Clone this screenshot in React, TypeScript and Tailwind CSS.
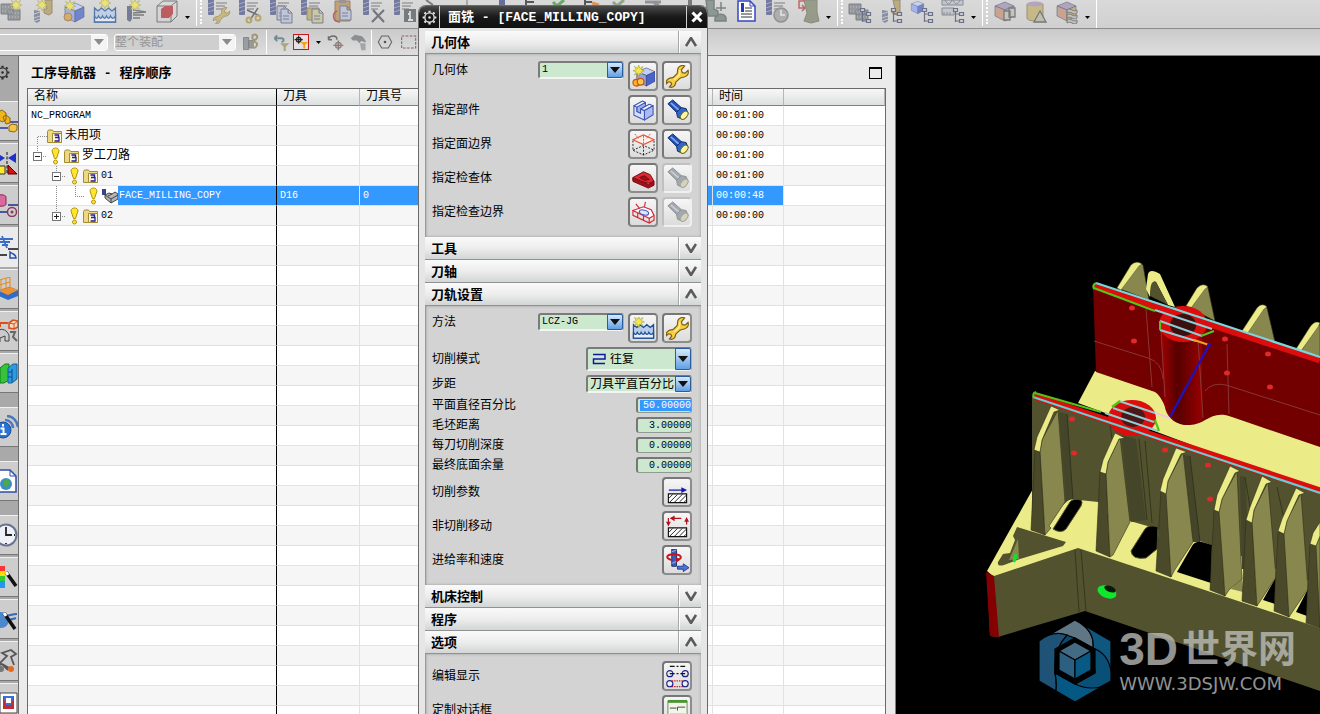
import { useState } from "react"
import type { ReactNode } from "react"
import clsx from "clsx"

const sans = "font-['Liberation_Sans','Noto_Sans_CJK_SC',sans-serif]"
const mono = "font-['Liberation_Mono','Noto_Sans_CJK_SC',monospace]"

/* ---------- shared icon pieces, all on a 24 x 24 grid ---------- */

function Icon({ children, className = "size-6" }: { children: ReactNode; className?: string }) {
    return (
        <svg viewBox="0 0 24 24" className={clsx("shrink-0", className)} fill="none" stroke="none" aria-hidden="true">
            {children}
        </svg>
    )
}

const Star = ({ x = 0, y = 0 }) => (
    <path
        transform={`translate(${x} ${y})`}
        d="M6 0l1.2 3.6L10.500 1.500 8.600 4.800 12 6 8.600 7.200 10.500 10.500 7.200 8.600 6 12 4.800 8.600 1.500 10.500 3.400 7.200 0 6 3.400 4.800 1.500 1.500 4.800 3.400z"
        fill="#f4e84c"
        stroke="#8f8a3c"
        strokeWidth=".5"
    />
)

const Cutter = () => (
    <g>
        <rect x="1" y="-2" width="6" height="17" rx="1" fill="#4b5488" />
        <path d="M1 4l6-2M1 8l6-2M1 12l6-2" stroke="#8d96c0" />
        <path d="M9 3h11M9 6h9M9 9h7" stroke="#55585f" />
    </g>
)

const TreeMark = () => (
    <g stroke="#3f4768" strokeWidth="1.200">
        <path d="M14.500 11v11M14.500 14h4M14.500 21h4" />
        <path d="M12.500 8.500h4v3h-4zM18.500 12.500h4v3h-4zM18.500 19.500h4v3h-4z" fill="#c4c8d6" />
    </g>
)

const Cube = ({ top = "#c3cffa", left = "#8fa4f0", right = "#4763cc", x = 0, y = 0, s = 1 }) => (
    <g transform={`translate(${x} ${y}) scale(${s})`} stroke="#333a66" strokeWidth=".6">
        <path d="M2 6l10-4 9 4-9 4z" fill={top} />
        <path d="M2 6l10 4v11L2 16z" fill={left} />
        <path d="M12 10l9-4v10l-9 5z" fill={right} />
    </g>
)

const Waves = () => (
    <g fill="#b8cdea" stroke="#1c4f96" strokeWidth="1.300">
        <path d="M1.500 8v14h21V8l-3.500 3-3.500-3-3.500 3-3.500-3-3.500 3z" />
        <path d="M1.500 16c1.500 3 3 3 4 0 1.500 3 3 3 4 0 1.500 3 3 3 4 0 1.500 3 3 3 4 0 1.500 3 3 3 5 0v6h-21z" fill="#e8f0fb" />
    </g>
)

const DrillPart = () => (
    <g>
        <path d="M3 10l6 1v10l-3 2-3-2z" fill="#68718a" />
        <path d="M3 14l6-2M3 18l6-2M3 21l6-2" stroke="#c1c6d2" />
        <path d="M14 0h7v13l-3 2-5-2v-4h3z" fill="#b09a5c" stroke="#7c7049" />
    </g>
)

const BlockPart = () => (
    <g>
        <path d="M1 4h12v10H1zM8 10h12v10H8z" fill="#7b8087" stroke="#595d63" />
        <path d="M2 7h10M2 11h10M9 13h10M9 17h10" stroke="#b6b9bd" strokeDasharray="1 2" />
    </g>
)

const Page = ({ x = 9, y = 8, fill = "#b7c0d8" }) => (
    <path transform={`translate(${x} ${y})`} d="M0 0h7l4 4v10H0zM7 0v4h4M2 7h6M2 10h6" fill={fill} stroke="#575c78" />
)

const wrenchPath =
    "M13 2.500c2-2 5-2.200 6.500-1.500l-3.500 4 1 3 3 .5 3-3c.8 3-.5 6-4 7-2 .5-3 .2-4.500 1.500l-4 3.500c-1 1.500-.3 3-2 4.500-1.500 1.500-3.500 1.500-5 1l2.500-3-1-2-2.500-.5-2 2c-.6-2.500.5-4.500 2.500-5.500 2-1 3.500-.2 5-1.500l3.500-3.500c1-1.500 0-4.500 1.500-6.500z"

const toolbarCreate: ReactNode[] = [
    <><BlockPart /><Star x={10} y={-1} /></>,
    <><DrillPart /><Star x={5} y={-1} /></>,
    <><Cube x={1} y={1} /><circle cx="6" cy="17" r="4" fill="#d99a3c" stroke="#8c6a33" /><Star x={2} y={0} /></>,
    <><Waves /><Star x={6} y={-3} /></>,
    <><path d="M3 6h5v13l-2 3-3-2z" fill="#4e5677" /><path d="M9 10l13 2-13 1M9 15h11M9 18h7" stroke="#55585f" strokeWidth="1.500" /><Star x={5} y={-1} /></>,
    <><path d="M2 6l6-5h14v15l-6 6H2zM2 6h14v16M16 6l6-5" stroke="#555" /><path d="M6 9l4-3h8v8l-4 4H6z" fill="#b32b33" /></>,
]

const toolbarEdit: ReactNode[] = [
    <><Cutter /><path transform="translate(6 7) scale(.72)" d={wrenchPath} fill="#c7ad55" stroke="#776b42" /></>,
    <><Cutter /><path d="M12 20l8-12M9 10l13 6" stroke="#444" strokeWidth="1.500" /><circle cx="11" cy="20" r="2.500" stroke="#ad9540" strokeWidth="2" /><circle cx="20" cy="18" r="2.500" stroke="#ad9540" strokeWidth="2" /></>,
    <><Cutter /><Page x={8} y={6} /><Page x={12} y={9} /></>,
    <><Cutter /><path d="M7 8h12v12H7z" fill="#b9a662" stroke="#7b7047" /><Page x={12} y={9} fill="#c5c394" /></>,
    <><path d="M4 1h15v20H4z" fill="#b58c55" stroke="#7c6142" /><path d="M8-1h7v4H8z" fill="#7a7a80" /><Page x={9} y={6} /><path d="M9 22c-8 0-8-9-3-11" stroke="#b02f2f" strokeWidth="1.500" /></>,
    <><Cutter /><path d="M11 10l11 12M22 10L10 22" stroke="#4a4f5c" strokeWidth="2.200" /></>,
    <><Cutter /><path d="M11 9h12v13H11z" fill="#4f545c" /><path d="M17 11v2M15 14h2v6M15 20h5" stroke="#ddd" strokeWidth="1.800" /></>,
]

const toolbarHidden: ReactNode[] = [
    <path d="M2 0l7 5" stroke="#555" strokeWidth="2" />,
    <path d="M12 0v5" stroke="#555" />,
    <path d="M13 0h6v5h-6z" fill="#38427e" />,
    <path d="M9 0v5M9 2h8" stroke="#222" strokeWidth="2" />,
    <path d="M5 2l4 4 7-6" stroke="#3c9a38" strokeWidth="3" />,
    <><path d="M6 0v5M6 2h7" stroke="#222" strokeWidth="2" /><path d="M13 3l7 2" stroke="#db7b24" strokeWidth="3" /></>,
    <path d="M3 2l4 4 7-6" stroke="#719268" strokeWidth="3" />,
    <path d="M4 2h8l6 4M12 2h8" stroke="#777" strokeWidth="3" />,
    <path d="M18 0v6" stroke="#555" strokeWidth="4" />,
]

const toolbarOutput: ReactNode[] = [
    <><path d="M3 0h8v9l4 2v5H5zM18 2v9M13 8h10M12 18c3-6 10-4 11 0v3H12z" fill="#6f7f7a" stroke="#56625e" strokeWidth="1.500" /></>,
    <><path d="M4 1h12l5 5v15H4z" fill="#fff" stroke="#3347c4" strokeWidth="1.500" /><path d="M16 1v5h5" stroke="#3347c4" /><path d="M7 3h3v9H7z" fill="#2239b8" /><path d="M11 8h7M7 14h11M7 17h11M11 11h7" stroke="#333" /></>,
    <><Cutter /><circle cx="16" cy="15" r="7" fill="#9c9ea0" stroke="#737577" strokeWidth="1.500" /><path d="M16 10v5h4" stroke="#eee" strokeWidth="1.500" /></>,
    <><path d="M8 0h13v12l2 9-8 2-7-2 3-8z" fill="#7d846a" stroke="#676d58" /><path d="M9 1H3v7h5M6 5l3 3-3 3" stroke="#b33a3a" strokeWidth="1.500" /></>,
]

const toolbarViews: ReactNode[] = [
    <><BlockPart /><TreeMark /></>,
    <><DrillPart /><TreeMark /></>,
    <><Cube s={0.65} /><TreeMark /></>,
    <><path d="M1 0h21v5H1zM1 8h12v7H1z" fill="#bac2cc" stroke="#666d76" /><path d="M3 15v-3M6 15v-3M9 15v-3M4 0c2 5 5 5 7 0M12 0c2 5 5 5 7 0" stroke="#666d76" /><TreeMark /></>,
]

const toolbarShape: ReactNode[] = [
    <><Cube top="#a08fb5" left="#c68f72" right="#b8a25c" /><path d="M11 11h6v9h-6zM16 8h6v9h-6z" fill="#b9bdb9" stroke="#555" strokeWidth="1.300" /></>,
    <><path d="M3 4v14c0 4 16 4 16 0V4z" fill="#bfae66" stroke="#7e7550" /><ellipse cx="11" cy="4" rx="8" ry="2.500" fill="#a58fb2" /><path d="M16 11l6 11H10z" fill="#b5b8a0" stroke="#505050" strokeWidth="1.300" /></>,
    <><Cube top="#a08fb5" left="#c68f72" right="#b8a25c" /><path d="M12 10c4-3 6 3 10 0v3c-4 3-6-3-10 0zM12 15c4-3 6 3 10 0v3c-4 3-6-3-10 0zM12 20c4-3 6 3 10 0v3c-4 3-6-3-10 0z" fill="#b9bdb9" stroke="#555" /></>,
]

function ToolGroup({ icons, live = -1 }: { icons: ReactNode[]; live?: number }) {
    return (
        <div className="flex">
            {icons.map((icon, i) => (
                <button key={i} type="button" className={clsx("flex w-[31px] justify-center", i !== live && "opacity-70")}>
                    <Icon>{icon}</Icon>
                </button>
            ))}
        </div>
    )
}

function Caret() {
    return (
        <button type="button" aria-label="more" className="flex w-2.5 items-center justify-center">
            <svg viewBox="0 0 5 3" className="h-[3px] w-[5px]"><path d="M0 0h5L2.500 3z" /></svg>
        </button>
    )
}

function Grip() {
    return (
        <div className="flex h-6 w-[11px] items-center pl-1">
            <span className="h-7 w-px bg-white" />
            <span className="ml-[3px] h-6 w-0 border-l-2 border-dotted border-white" />
        </div>
    )
}

/* ---------- toolbars ---------- */

function MainToolbar() {
    return (
        <div className="flex h-[29px] shrink-0 overflow-hidden border-b border-[#8c8c8c] bg-linear-to-b from-[#d9d9d9] to-[#d0d0d0]">
            <div className="-ml-1 flex shrink-0">
                <ToolGroup icons={toolbarCreate} />
                <div className="flex pt-[7px]"><Caret /></div>
                <Grip />
                <ToolGroup icons={toolbarEdit} />
                <ToolGroup icons={toolbarHidden} />
                <ToolGroup icons={toolbarOutput} live={1} />
                <div className="flex pt-[7px]"><Caret /></div>
                <Grip />
                <ToolGroup icons={toolbarViews} />
                <div className="flex pt-[7px]"><Caret /></div>
                <Grip />
                <ToolGroup icons={toolbarShape} />
                <div className="flex pt-[7px]"><Caret /></div>
                <span className="ml-1 h-7 w-px bg-white" />
            </div>
        </div>
    )
}

function DisabledCombo({ label, options, className }: { label: string; options: string[]; className: string }) {
    return (
        <div className={clsx("relative", className)}>
            <select
                aria-label={label}
                disabled
                className="block h-[17px] w-full appearance-none rounded-[3px] border border-white bg-[#cfcfcf] text-[12px] leading-none text-[#969696] opacity-100"
            >
                {options.map((o) => <option key={o}>{o}</option>)}
            </select>
            <span className="pointer-events-none absolute inset-y-px right-px flex w-4 items-center justify-center rounded-r-[2px] bg-[#f4f4f4]">
                <svg viewBox="0 0 10 6" className="h-1.5 w-2.5"><path d="M0 0h10L5 6z" fill="#8b8b8b" /></svg>
            </span>
        </div>
    )
}

function SelectionBar() {
    return (
        <div className="flex h-[27px] shrink-0 items-center overflow-hidden border-b border-[#7a7a7a] bg-linear-to-b from-[#cacaca] to-[#dedede]">
            <DisabledCombo label="type" options={[""]} className="-ml-1 w-[112px]" />
            <DisabledCombo label="scope" options={["整个装配"]} className="ml-[6px] w-[122px]" />
            <button type="button" className="ml-[6px] opacity-70">
                <Icon className="size-[18px]">
                    <path d="M2 6h7v16H2zM9 10h6v10H9z" fill="#808890" stroke="#555" />
                    <path d="M14 3c5-3 8 2 5 5s-6 0-5-3zM13 13c5-3 9 1 6 5s-7 0-6-3z" stroke="#8a7d55" strokeWidth="2.500" />
                </Icon>
            </button>
            <span className="ml-1.5 h-6 w-px bg-white" />
            <button type="button" className="ml-1.5 opacity-70">
                <Icon className="size-[17px]">
                    <path d="M2 6h10c4 0 4 5 0 5M2 6l4-4M2 6l4 4" stroke="#44707c" strokeWidth="2.500" />
                    <path d="M10 13h13l-5 5v6h-3v-6z" fill="#a08f52" />
                </Icon>
            </button>
            <button type="button" className="ml-[3px] border border-[#c4171e] bg-[#e8dfdf]">
                <Icon className="size-[14px]">
                    <path d="M8 1v14M1 8h14M4 8a4 4 0 108 0 4 4 0 10-8 0" stroke="#222" strokeWidth="2" />
                    <path d="M11 12h13l-5 5v6h-3v-6z" fill="#f2a516" />
                </Icon>
            </button>
            <div className="ml-1 flex"><Caret /></div>
            <button type="button" className="ml-1 opacity-70">
                <Icon className="size-[17px]">
                    <path d="M2 8c2-7 12-7 12 0M2 8V3M2 8h5" stroke="#444" strokeWidth="2" />
                    <path d="M16 9v14M9 16h14" stroke="#844" strokeWidth="2" />
                    <circle cx="16" cy="16" r="4" stroke="#666" strokeWidth="2" />
                </Icon>
            </button>
            <button type="button" className="ml-1.5 opacity-70">
                <Icon className="size-[17px]">
                    <path d="M1 6l6-5 10 2 5 6v3l-6-2-3 3-3-4H4z" fill="#707476" />
                    <path d="M14 13h8v10h-6z" fill="#8c9196" />
                </Icon>
            </button>
            <span className="ml-1 h-6 w-px bg-white" />
            <button type="button" className="ml-[5px]">
                <Icon className="size-4"><path d="M7 3h10l5 9-5 9H7l-5-9z" stroke="#666" strokeWidth="1.600" /><circle cx="12" cy="12" r="2" fill="#555" /></Icon>
            </button>
            <button type="button" className="ml-2">
                <Icon className="size-4"><path d="M1 3h21v18H1z" stroke="#8a6363" strokeWidth="1.600" strokeDasharray="4 2" /></Icon>
            </button>
        </div>
    )
}

/* ---------- resource bar on the left edge ---------- */

const dockTabs: { icon: ReactNode; gap?: boolean; active?: boolean }[] = [
    { icon: <><path d="M14 13h10M2 19h12" stroke="#223a9b" strokeWidth="1.500" /><path d="M4 3l4-2 4 3v7l-4 2-4-3zM9 8l3-2 4 3v5l-4 1z" fill="#f1b51c" stroke="#8a6410" /><path d="M15 17l3-2 5 1v5l-3 2-5-1z" fill="#f6c544" stroke="#8a6410" /></> },
    { icon: <><path d="M13 1v22" stroke="#111" strokeDasharray="3 1.500" /><path d="M3 2l8 5-8 5zM22 2l-8 5 8 5z" fill="#1f31c8" /><path d="M2 15h9v8H2z" fill="#ffe92e" stroke="#333" /><path d="M14 14l9 9h-9z" fill="#d01414" stroke="#500" /></> },
    { icon: <><path d="M2 4c0-3 10-3 10 0v7c0 3-10 3-10 0z" fill="#d96a9c" stroke="#8b2758" /><path d="M14 12h10M2 19h11" stroke="#1f2f8a" strokeWidth="1.500" /><circle cx="18" cy="19" r="4.500" stroke="#8e3663" strokeWidth="1.500" /><circle cx="18" cy="19" r="1.500" fill="#8e3663" /></> },
    { icon: <><path d="M3 4h16M6 7h10M8 10h6M8 1l5 12" stroke="#3c6dc4" strokeWidth="1.800" /><path d="M14 14h10M2 20h11" stroke="#111" strokeWidth="1.500" /><path d="M16 17v6h6c0-4-2-3-6-6z" stroke="#2b4fae" strokeWidth="1.500" /></>, active: true },
    { icon: <><path d="M2 4l14-4v10L2 14zM2 9l14-4M7 3v10M12 1v11" stroke="#e28a22" /><path d="M5 14l11-4 8 3v6l-10 4-9-4z" fill="#2e6dc9" /><path d="M5 14l11-4 8 3-10 5z" fill="#f09031" /></> },
    { icon: <><path d="M15 4l4-3 5 1v6l-4 2-5-1z" fill="#f7d9c3" stroke="#d8501b" strokeWidth="1.600" /><path d="M15 4l5 1v5M20 5l4-3" stroke="#d8501b" /><path d="M6 8V4h8" stroke="#d8501b" strokeWidth="2" /><path d="M3 12c6-4 10 0 12 4v6h-4v-5l-5 2v4H3z" fill="#c9cbce" stroke="#444" /><path d="M16 13h5l-2 5 4 4" stroke="#666" strokeWidth="2" /></> },
    { icon: <><path d="M2 6l4-3v17l-4 2z" fill="#2c6bd6" /><path d="M6 7l5-4h4v16l-5 3H6z" fill="#37c23c" stroke="#117f17" /><path d="M14 7l5-4h4v15l-5 4h-4z" fill="#2e9be0" stroke="#11609c" /><path d="M18 8v13M14 11h4M14 16h4" stroke="#0c4d80" /></>, gap: true },
    { icon: <><circle cx="9" cy="15" r="8" fill="#2a72cf" stroke="#184f9e" /><path d="M9 9v2.500M6.500 13.500H9.500V19M6.500 19h6" stroke="#fff" strokeWidth="2" /><path d="M11 5c5 0 8 4 8 8M13 1c6 0 10 5 11 11" stroke="#4a78bf" strokeWidth="2.500" /></>, gap: true },
    { icon: <><path d="M2 1h14l6 6v16H2z" fill="#fdfdff" stroke="#2f4fa6" strokeWidth="1.500" /><path d="M16 1v6h6" stroke="#2f4fa6" /><circle cx="12" cy="15" r="6" fill="#3b8ec9" /><path d="M9 11l5-1 2 4-3 5-3-3z" fill="#4aa84d" /></>, gap: true },
    { icon: <><circle cx="12" cy="12" r="10.500" fill="#eef1f8" stroke="#69738c" strokeWidth="2" /><path d="M12 4v8h6M12 20v1M20 12h1" stroke="#223" strokeWidth="1.800" /></> },
    { icon: <><path d="M2 1h9v5H2z" fill="#f33" /><path d="M2 6h9v5H2z" fill="#fd0" /><path d="M2 11h9v5H2z" fill="#3c3" /><path d="M2 16h9v7H2z" fill="#29e" /><path d="M12 7l10 14" stroke="#111" strokeWidth="3.500" /><path d="M12 7l2 3" stroke="#fff" strokeWidth="3" /></> },
    { icon: <><circle cx="7" cy="13" r="8" fill="#4a87cf" /><path d="M10 9c5 0 8-2 13-2M13 13c4 0 6-1 9-2" stroke="#3568b8" strokeWidth="2" /><path d="M10 6l11 16" stroke="#111" strokeWidth="3.500" /><path d="M10 6l2 3" stroke="#fff" strokeWidth="3" /></> },
    { icon: <><path d="M4 16l9-9-5-3 9-3 5 4-5 3 3 8M3 17l5-2 6 6M8 15l9 5" stroke="#555" strokeWidth="1.800" /><circle cx="17" cy="20" r="3" fill="#e06a22" /><circle cx="7" cy="20" r="3" fill="#777" /></> },
    { icon: <><path d="M6 2h17v20H6z" fill="#fff" stroke="#444" /><path d="M9 5h11v13H9z" fill="#c22b34" /><path d="M9 5l3 9h5l3-9z" fill="#3d6fd6" /><path d="M12 7h5v5h-5z" fill="#fff" /></> },
]

const Gear = ({ stroke }: { stroke: string }) => (
    <Icon className="size-[15px]">
        <circle cx="12" cy="12" r="7.500" stroke={stroke} strokeWidth="2.200" />
        <circle cx="12" cy="12" r="2" fill={stroke} />
        <path d="M12 1v3M12 20v3M1 12h3M20 12h3M4 4l2 2M18 18l2 2M20 4l-2 2M4 20l2-2" stroke={stroke} strokeWidth="3.500" />
    </Icon>
)

function ResourceBar() {
    return (
        <nav className="flex w-[19px] shrink-0 flex-col overflow-hidden border-r border-[#6e6e6e] bg-[#a9a9a9]">
            <button type="button" aria-label="settings" className="flex h-[45px] shrink-0 items-center justify-end pr-2 pb-3">
                <Gear stroke="#2b2b2b" />
            </button>
            {dockTabs.map((tab, i) => (
                <button
                    key={i}
                    type="button"
                    className={clsx(
                        "flex h-10 shrink-0 items-center justify-end border-y",
                        tab.active ? "border-[#ebebeb] bg-[#ebebeb]" : "border-t-[#f0f0f0] border-b-[#777] bg-[#cdcdcd]",
                        tab.gap ? "mb-[14px]" : "mb-0.5"
                    )}
                >
                    <Icon>{tab.icon}</Icon>
                </button>
            ))}
        </nav>
    )
}

/* ---------- operation navigator ---------- */

type Guide = "blank" | "open" | "closed" | "start" | "line" | "elbow"

function TreeGuide({ kind }: { kind: Guide }) {
    return (
        <svg viewBox="0 0 19 20" className="h-5 w-[19px] shrink-0" fill="none" stroke="#8a8a8a" shapeRendering="crispEdges">
            {kind === "start" && <path d="M9.500 20V10.500H19" strokeDasharray="1 1" />}
            {kind === "line" && <path d="M9.500 0v20" strokeDasharray="1 1" />}
            {kind === "elbow" && <path d="M9.500 0v10.500H19" strokeDasharray="1 1" />}
            {(kind === "open" || kind === "closed") && (
                <>
                    <path d="M9.500 0v5M15 10.500h4" strokeDasharray="1 1" />
                    <rect x="5.500" y="6.500" width="8" height="8" fill="#fff" stroke="#777" />
                    <path d={kind === "open" ? "M7 10.500h5" : "M7 10.500h5M9.500 8v5"} stroke="#222" />
                </>
            )}
        </svg>
    )
}

const Bang = () => (
    <svg viewBox="0 0 17 20" className="h-5 w-[17px] shrink-0">
        <path d="M5 5c0-4 7-4 7 0L9.500 12.500h-2z" fill="#ffe52b" stroke="#b39410" />
        <circle cx="8.500" cy="16" r="2" fill="#ffe52b" stroke="#b39410" />
    </svg>
)

const Folder = () => (
    <svg viewBox="0 0 15 14" className="mr-0.5 h-[14px] w-[15px] shrink-0">
        <path d="M.5 2.500l1-1.500h4l1 1.500h8v11H.500z" fill="#ecd884" stroke="#a58a34" />
        <path d="M5.500 4.500h9v9h-9z" fill="#fbf6d2" stroke="#a58a34" />
        <path d="M7.500 6h4v2.500h-3M8 8.500h4V12H7.500" fill="none" stroke="#23219c" strokeWidth="1.300" />
    </svg>
)

const MillOp = () => (
    <svg viewBox="0 0 16 16" className="size-4 shrink-0">
        <path d="M0 1h4v6H0z" fill="#39428a" />
        <path d="M3 7l4-2 3 1 3-2 3 2v5l-7 4-6-5z" fill="#b4b4b4" stroke="#444" />
        <path d="M3 7l6 4 7-4M9 11v4M6 8l4-2" fill="none" stroke="#444" />
    </svg>
)

type Row = { name: string; guides: Guide[]; bang?: boolean; kind: "root" | "group" | "op"; tool?: string; no?: string; time: string }

const rows: Row[] = [
    { name: "NC_PROGRAM", guides: [], kind: "root", time: "00:01:00" },
    { name: "未用项", guides: ["start"], kind: "group", time: "00:00:00" },
    { name: "罗工刀路", guides: ["open"], bang: true, kind: "group", time: "00:01:00" },
    { name: "01", guides: ["blank", "open"], bang: true, kind: "group", time: "00:01:00" },
    { name: "FACE_MILLING_COPY", guides: ["blank", "line", "elbow"], bang: true, kind: "op", tool: "D16", no: "0", time: "00:00:48" },
    { name: "02", guides: ["blank", "closed"], bang: true, kind: "group", time: "00:00:00" },
]

const emptyRows = Array.from({ length: 25 }, (_, i) => i)

// CJK names read at 12px, latin ones are set narrower
const nameSize = (s: string) => (/[a-z0-9]/i.test(s) ? "text-[10px]" : "text-[12px]")

function Navigator() {
    const head = "h-[17px] border-r border-b border-r-[#b5b5b5] border-b-[#808080] p-0 pl-1.5 text-left text-[12px] leading-4 font-normal"
    const cell = "h-5 border-r border-b border-[#e2e2e2] p-0 pl-[3px]"
    return (
        <section className="flex w-[877px] shrink-0 flex-col border-r border-[#808080] bg-[#ebebeb] pr-[9px] pl-2">
            <header className="flex h-8 shrink-0 items-center justify-between pt-0.5 pr-1 pl-1">
                <h2 className={clsx("text-[13px] leading-none font-bold", mono)}>工序导航器 - 程序顺序</h2>
                <button type="button" aria-label="maximize" className="h-3 w-[13px] border border-t-2 border-black" />
            </header>
            <div className="min-h-0 flex-1 overflow-hidden border border-b-0 border-[#6a6a6a] bg-white">
                <table className={clsx("w-full table-fixed border-separate border-spacing-0 text-[10px] leading-none", mono)}>
                    <colgroup>
                        <col className="w-[249px]" />
                        <col className="w-[83px]" />
                        <col className="w-[62px]" />
                        <col className="w-[291px]" />
                        <col className="w-[71px]" />
                        <col />
                    </colgroup>
                    <thead>
                        <tr className="bg-linear-to-b from-[#f7f7f7] to-[#dcdfdf]">
                            <th className={clsx(head, "border-r-black")}>名称</th>
                            <th className={head}>刀具</th>
                            <th className={head}>刀具号</th>
                            <th className={head} />
                            <th className={head}>时间</th>
                            <th className={head} />
                        </tr>
                    </thead>
                    <tbody className="[&>tr:nth-child(even)]:bg-[#f6f6f6]">
                        {rows.map((row) => {
                            const selected = row.kind === "op"
                            const tone = selected && "bg-[#3399ff] text-white"
                            return (
                                <tr key={row.name}>
                                    <td className="h-5 border-r border-b border-r-black border-b-[#e2e2e2] p-0">
                                        <div className="flex h-[19px] items-center overflow-hidden">
                                            {row.guides.map((g, i) => <TreeGuide key={i} kind={g} />)}
                                            {row.bang && <Bang />}
                                            {row.kind === "group" && <Folder />}
                                            {row.kind === "op" && <MillOp />}
                                            <span className={clsx("flex h-full flex-1 items-center", row.kind === "root" ? "pl-[3px]" : "pl-px", nameSize(row.name), tone)}>
                                                {row.name}
                                            </span>
                                        </div>
                                    </td>
                                    <td className={clsx(cell, tone)}>{row.tool}</td>
                                    <td className={clsx(cell, tone)}>{row.no}</td>
                                    <td className={clsx(cell, tone)} />
                                    <td className={clsx(cell, tone)}>{row.time}</td>
                                    <td className={clsx(cell, "border-r-0")} />
                                </tr>
                            )
                        })}
                        {emptyRows.map((n) => (
                            <tr key={n}>
                                <td className="h-5 border-r border-b border-r-black border-b-[#e2e2e2]" />
                                <td className={cell} />
                                <td className={cell} />
                                <td className={cell} />
                                <td className={cell} />
                                <td className={clsx(cell, "border-r-0")} />
                            </tr>
                        ))}
                    </tbody>
                </table>
            </div>
        </section>
    )
}

/* ---------- face milling dialog ---------- */

const Torch = ({ muted = false }) => (
    <>
        <path d="M2 5l5-4 9 8-5 5z" fill={muted ? "#a3a7ae" : "#2450b4"} stroke={muted ? "#8d9198" : "#102a68"} />
        <path d="M5 4l9 8" stroke={muted ? "#c9ccd1" : "#78a9f5"} strokeWidth="1.800" />
        <path d="M11 14l5-5 5 1 2 5-6 6-5-2z" fill={muted ? "#a3a7ae" : "#2f66cc"} stroke={muted ? "#8d9198" : "#102a68"} />
        <ellipse cx="19" cy="17" rx="3" ry="5" transform="rotate(40 19 17)" fill={muted ? "#d5d4b8" : "#fff59a"} stroke={muted ? "#a4a4a0" : "#6a6a20"} />
    </>
)

const Wrench = () => (
    <>
        <path d={wrenchPath} fill="#f7cf45" stroke="#7d5c0c" strokeWidth="1.200" />
        <path d="M14.500 5c-.5 3 .5 4-1 6l-5 4.500" stroke="#fff3b0" strokeWidth="1.200" />
    </>
)

const Hatch = () => (
    <>
        <path d="M2.500 13.500h19v9h-19z" fill="#fff" stroke="#111" strokeWidth="1.200" />
        <path d="M3 18l4-4M4 22l8-8M9 22l8-8M14 22l7-7M19 22l2-2" stroke="#222" />
    </>
)

const NewGeometry = () => (
    <>
        <Cube x={3} y={1} s={1} />
        <circle cx="4.500" cy="18.500" r="3.500" fill="#ffb02e" stroke="#c8560c" strokeWidth="1.300" />
        <circle cx="9" cy="17.500" r="3.500" fill="#ffc84a" stroke="#c8560c" strokeWidth="1.300" />
        <Star x={1} y={0} />
    </>
)

const PartBlock = () => (
    <g stroke="#3e55b3" strokeWidth="1.100" strokeLinejoin="round">
        <path d="M5 8.500l9-5v4.200l-5 2.800V15l-4-2z" fill="#9fb2ee" />
        <path d="M2 7l3 1.500V13l4 2v-4.500l4 1.500v10L2 17z" fill="#d5dffb" />
        <path d="M2 7l9-5 3 1.500-9 5z" fill="#f0f4ff" />
        <path d="M9 10.500l9-5 4 1.500-9 5z" fill="#f0f4ff" />
        <path d="M13 12l9-5v9.500L13 22z" fill="#a9bbf2" />
    </g>
)

const FaceBoundary = () => (
    <>
        <path d="M1 8v10l11 5 11-5V8M12 14v9M1 18l11-5 11 5" stroke="#222" strokeDasharray="2 1.500" />
        <path d="M1 7l11-5 11 5-11 5z" fill="#fff1ec" stroke="#e2563c" strokeWidth="1.300" />
        <path d="M3 1l4 5M19 1l-4 5M12 11v-8" stroke="#e2563c" strokeDasharray="2 1" />
    </>
)

const CheckBody = () => (
    <g stroke="#7a0a10">
        <path d="M1 11l11-6 7 3 4 7-4 2-18-3z" fill="#dc2a34" />
        <path d="M1 11v4l16 7 6-3v-4l-6 3z" fill="#a3121b" />
        <path d="M8 11l5-2 5 4-5 1z" fill="#9d121b" />
    </g>
)

const CheckBoundary = () => (
    <g stroke="#d02a36" strokeWidth="1.200">
        <path d="M1 10l11-4 8 3 3 6-5 3z" fill="#fff" />
        <path d="M1 10v5l17 8 5-3v-5M18 18v5M6 12.500v5M12 15.500v5" />
        <path d="M4 3l4 5M14 1l-1 5" />
        <ellipse cx="12.500" cy="12" rx="5" ry="2.500" transform="rotate(15 12.500 12)" fill="#dfe5ff" stroke="#4954c4" />
    </g>
)

const CutParams = () => (
    <>
        <path d="M3 9.500h16" stroke="#1616a8" strokeWidth="1.300" />
        <path d="M16 6.500l6 3-6 3z" fill="#1616a8" />
        <Hatch />
    </>
)

const NonCutting = () => (
    <>
        <path d="M5 3.500h11M2.500 3v6M21.500 10V5" stroke="#b5121b" strokeWidth="1.300" />
        <path d="M4 3.500l5-3v6zM0 7h5l-2.500 5zM19 7h5l-2.500-5z" fill="#b5121b" />
        <Hatch />
    </>
)

const FeedSpeed = () => (
    <>
        <path d="M6 0h5v18H6z" fill="#3e5db8" stroke="#1c2d6b" />
        <path d="M6 3l5-2M6 15l5-2" stroke="#a3b7f0" />
        <path d="M6 11.500C-1 10 0 5.500 8 5.500s10 4 4 6" stroke="#c2141d" strokeWidth="2" />
        <path d="M10 8l5 3-4 3z" fill="#c2141d" />
        <path d="M12 18h6v-2.500l6 4-6 4V21h-6z" fill="#4e74d8" stroke="#1f3e94" />
    </>
)

const EditDisplay = () => (
    <g strokeWidth="1.200">
        <path d="M4 1.500h16" stroke="#111" strokeDasharray="5 2 2 2" />
        <circle cx="4" cy="9" r="3.200" stroke="#1d2380" />
        <circle cx="20" cy="9" r="3.200" stroke="#1d2380" />
        <path d="M4 9h5M11 9h2M15 9h5" stroke="#111" />
        <path d="M6 16.500h12M6 22.500h12" stroke="#c8202c" strokeDasharray="1.500 1" />
        <circle cx="4" cy="19.500" r="3.200" stroke="#1d2380" fill="#eef" />
        <circle cx="20" cy="19.500" r="3.200" stroke="#1d2380" fill="#eef" />
    </g>
)

const CustomDialog = () => (
    <>
        <path d="M2 2h20v21H2z" fill="#f2f6ea" stroke="#6d8a5c" />
        <path d="M2 1h20v3H2z" fill="#4c9433" />
        <path d="M4 9.500h7M12 12V8.500h8M4 16h16" stroke="#444" />
    </>
)

function IconButton({ label, children, disabled = false }: { label: string; children: ReactNode; disabled?: boolean }) {
    return (
        <button
            type="button"
            aria-label={label}
            disabled={disabled}
            className={clsx(
                "flex size-[30px] shrink-0 items-center justify-center rounded-[4px] border-2 bg-linear-to-b from-[#f6f6f6] to-[#dcdcdc]",
                disabled ? "border-[#c0c0c0] border-r-[#f0f0f0] border-b-[#f0f0f0]" : "border-[#777] border-r-[#8c8c8c] border-b-[#8c8c8c]"
            )}
        >
            <Icon className="size-[23px]">{children}</Icon>
        </button>
    )
}

function Combo({ id, options, className, inner = "pl-0.5" }: { id: string; options: string[]; className: string; inner?: string }) {
    return (
        <div className={clsx("relative shrink-0", className)}>
            <select
                id={id}
                className={clsx(
                    "block size-full appearance-none rounded-[3px] border-2 border-[#7b7b7b] border-r-[#a5b0a5] border-b-[#f4f4f4] bg-[#cce8cf] leading-none text-black",
                    inner
                )}
            >
                {options.map((o) => <option key={o}>{o}</option>)}
            </select>
            <span className="pointer-events-none absolute inset-y-px right-px flex w-4 items-center justify-center rounded-r-[2px] border border-[#2b5c9c] bg-linear-to-b from-[#d7e9fb] to-[#5f9fe4]">
                <svg viewBox="0 0 10 6" className="h-1.5 w-2.5 shrink-0"><path d="M0 0h10L5 6z" fill="#111" /></svg>
            </span>
        </div>
    )
}

function Field({ id, label, value, selected = false }: { id: string; label: string; value: string; selected?: boolean }) {
    const [text, setText] = useState(value)
    return (
        <div className="flex h-4 items-center justify-between">
            <label htmlFor={id}>{label}</label>
            <span className="flex h-4 w-14 rounded-[3px] border-2 border-r border-b border-[#777] border-r-[#8f9a90] border-b-[#8f9a90] bg-[#cce8cf] py-px pl-0.5">
                <input
                    id={id}
                    value={text}
                    onChange={(e) => setText(e.target.value)}
                    className={clsx("w-full min-w-0 text-right text-[10px] leading-none outline-none", mono, selected && "bg-[#3399ff] text-white")}
                />
            </span>
        </div>
    )
}

function Line({ label, children }: { label: string; children: ReactNode }) {
    return (
        <div className="flex h-[30px] items-center gap-1">
            <span className="flex-1">{label}</span>
            {children}
        </div>
    )
}

function Section({ title, open = false, children }: { title: string; open?: boolean; children?: ReactNode }) {
    const [expanded, setExpanded] = useState(open)
    return (
        <section className="shrink-0">
            <button
                type="button"
                aria-expanded={expanded}
                onClick={() => setExpanded(!expanded)}
                className="flex h-[23px] w-full items-stretch border-b border-[#8f9292] bg-linear-to-b from-[#fafafa] via-[#ededed] to-[#d3d6d6] text-left"
            >
                <span className="flex flex-1 items-center border-r border-[#a8a8a8] pl-1.5 text-[13px] leading-none font-bold">{title}</span>
                <span className="flex w-[22px] items-center justify-center border-l border-white">
                    <svg viewBox="0 0 12 10" className="h-2.5 w-3" fill="none" stroke="#5b5b5b" strokeWidth="2.600">
                        <path d={expanded ? "M1 9l5-8 5 8" : "M1 1l5 8 5-8"} />
                    </svg>
                </span>
            </button>
            {expanded && children && (
                <div className="flex flex-col gap-1 border-l border-[#9a9a9a] bg-[#d3d3d3] pt-[7px] pr-[9px] pb-2.5 pl-1.5 shadow-[inset_0_0_3px_#999]">
                    {children}
                </div>
            )}
        </section>
    )
}

function MillingDialog() {
    return (
        <div role="dialog" aria-labelledby="dlg-title" className="absolute top-[5px] bottom-0 left-[418px] flex w-[290px] flex-col overflow-hidden rounded-t-lg border border-b-0 border-[#6a6a6a] bg-[#e6e6e6] text-[12px] leading-none">
            <header className="flex h-[22px] shrink-0 items-center bg-linear-to-b from-[#4b4b4b] via-[#191919] to-[#101010] text-white">
                <button type="button" aria-label="options" className="flex h-full w-[21px] items-center justify-center border-r border-[#cfcfcf]"><Gear stroke="#e6e6e6" /></button>
                <h1 id="dlg-title" className={clsx("flex-1 pl-2 text-[13px] font-bold whitespace-nowrap", mono)}>面铣 - [FACE_MILLING_COPY]</h1>
                <button type="button" aria-label="close" className="flex h-full w-[21px] items-center justify-center border-l border-[#cfcfcf]">
                    <svg viewBox="0 0 12 12" className="size-3" stroke="#fff" strokeWidth="3"><path d="M1.500 1.500l9 9M10.500 1.500l-9 9" /></svg>
                </button>
            </header>
            <div className="mx-1.5 mt-[3px] flex min-h-0 flex-1 flex-col overflow-hidden">
                <Section title="几何体" open>
                    <div className="flex h-[30px] items-start gap-1">
                        <label htmlFor="geometry" className="flex h-[18px] flex-1 items-center">几何体</label>
                        <Combo id="geometry" options={["1"]} className={clsx("h-[18px] w-[86px] text-[10px]", mono)} />
                        <IconButton label="新建几何体"><NewGeometry /></IconButton>
                        <IconButton label="编辑几何体"><Wrench /></IconButton>
                    </div>
                    <Line label="指定部件">
                        <IconButton label="选择部件"><PartBlock /></IconButton>
                        <IconButton label="显示部件"><Torch /></IconButton>
                    </Line>
                    <Line label="指定面边界">
                        <IconButton label="选择面边界"><FaceBoundary /></IconButton>
                        <IconButton label="显示面边界"><Torch /></IconButton>
                    </Line>
                    <Line label="指定检查体">
                        <IconButton label="选择检查体"><CheckBody /></IconButton>
                        <IconButton label="显示检查体" disabled><Torch muted /></IconButton>
                    </Line>
                    <Line label="指定检查边界">
                        <IconButton label="选择检查边界"><CheckBoundary /></IconButton>
                        <IconButton label="显示检查边界" disabled><Torch muted /></IconButton>
                    </Line>
                </Section>
                <Section title="工具" />
                <Section title="刀轴" />
                <Section title="刀轨设置" open>
                    <div className="flex h-[30px] items-start gap-1">
                        <label htmlFor="method" className="flex h-[18px] flex-1 items-center">方法</label>
                        <Combo id="method" options={["LCZ-JG"]} className={clsx("h-[18px] w-[86px] text-[10px]", mono)} />
                        <IconButton label="新建方法"><Waves /><Star x={1} y={-1} /></IconButton>
                        <IconButton label="编辑方法"><Wrench /></IconButton>
                    </div>
                    <div className="flex h-6 items-center justify-between">
                        <label htmlFor="pattern">切削模式</label>
                        <div className="relative">
                            <Combo id="pattern" options={["往复"]} className="h-6 w-[106px]" inner="pl-[22px]" />
                            <svg viewBox="0 0 14 12" className="pointer-events-none absolute top-1.5 left-1.5 h-3 w-3.5" fill="none" stroke="#14149e" strokeWidth="1.500">
                                <path d="M1 1.500h12v4.500H1.500v4.500H13" />
                            </svg>
                        </div>
                    </div>
                    <div className="flex h-[18px] items-center justify-between">
                        <label htmlFor="stepover">步距</label>
                        <Combo id="stepover" options={["刀具平直百分比"]} className="h-[18px] w-[106px]" />
                    </div>
                    <Field id="percent" label="平面直径百分比" value="50.00000" selected />
                    <Field id="blank" label="毛坯距离" value="3.00000" />
                    <Field id="depth" label="每刀切削深度" value="0.00000" />
                    <Field id="stock" label="最终底面余量" value="0.00000" />
                    <Line label="切削参数"><IconButton label="切削参数"><CutParams /></IconButton></Line>
                    <Line label="非切削移动"><IconButton label="非切削移动"><NonCutting /></IconButton></Line>
                    <Line label="进给率和速度"><IconButton label="进给率和速度"><FeedSpeed /></IconButton></Line>
                </Section>
                <Section title="机床控制" />
                <Section title="程序" />
                <Section title="选项" open>
                    <Line label="编辑显示"><IconButton label="编辑显示"><EditDisplay /></IconButton></Line>
                    <Line label="定制对话框"><IconButton label="定制对话框"><CustomDialog /></IconButton></Line>
                </Section>
            </div>
        </div>
    )
}

/* ---------- graphics window ---------- */

const rearFins = [
    { side: "M1120 290L1138 263L1143 266L1149 301z", edge: "M1117 289L1131 266Q1136 261 1142 265L1139 267L1121 291z" },
    { side: "M1190 309L1204 287L1208 289L1215 322z", edge: "M1186 307L1197 289Q1203 283 1208 288L1205 290L1191 309z" },
    { side: "M1246 334L1263 308L1267 309L1275 343z", edge: "M1242 332L1257 309Q1262 303 1267 308L1264 310L1247 335z" },
    { side: "M1301 352L1318 326L1320 326L1320 357z", edge: "M1296 350L1310 328Q1315 321 1320 324L1318 328L1301 352z" },
]

// front fins, left to right: narrow face, broad side, bright rim
const frontFins = [
    { face: "M1035 451L1040 452L1045 536L1031 531z", side: "M1040 452L1042 441L1058 411L1065 503L1049 527L1051 529L1045 536z", rim: "M1051 407L1037 438L1034 451L1040 453L1042 441L1054 413L1060 411z" },
    { face: "M1100 473L1106 475L1110 558L1096 552z", side: "M1106 475L1108 463L1120 438L1130 523L1113 556L1110 558z", rim: "M1115 434L1103 461L1100 473L1106 475L1108 463L1119 440L1125 439z" },
    { face: "M1161 492L1167 495L1171 578L1156 572z", side: "M1166 495L1168 482L1183 453L1193 543L1174 572L1171 578z", rim: "M1176 449L1163 480L1160 492L1166 495L1168 482L1181 455L1187 453z" },
    { face: "M1214 511L1220 513L1225 597L1210 591z", side: "M1219 513L1222 500L1237 472L1242 580L1229 591L1225 597z", rim: "M1230 467L1217 496L1214 511L1219 513L1222 500L1235 474L1240 472z" },
    { face: "M1246 521L1252 523L1257 607L1242 602z", side: "M1252 523L1254 511L1268 483L1276 578L1261 601L1257 607z", rim: "M1262 477L1250 508L1246 521L1252 524L1254 511L1266 485L1272 483z" },
    { face: "M1278 533L1285 535L1289 618L1274 612z", side: "M1284 535L1287 521L1301 494L1308 590L1293 612L1289 618z", rim: "M1296 489L1282 520L1278 532L1284 535L1287 522L1299 496L1305 494z" },
    { face: "M1310 545L1317 547L1320 629L1306 624z", side: "M1316 547L1320 536L1320 629z", rim: "M1320 523L1313 534L1310 545L1316 547L1320 537z" },
]

const spots = [
    [1132, 309], [1134, 342], [1225, 340], [1227, 374], [1268, 355], [1270, 388],
    [1072, 420], [1074, 454], [1165, 451], [1208, 466], [1210, 500],
]

function Viewport() {
    return (
        <main className="relative min-w-0 flex-1 overflow-hidden bg-black">
            <svg viewBox="896 57 424 657" preserveAspectRatio="xMinYMin slice" className="block h-[657px] w-full">
                <defs>
                    <linearGradient id="bore" x1="0" x2="1">
                        <stop offset="0" stopColor="#a00000" />
                        <stop offset=".4" stopColor="#560000" />
                        <stop offset="1" stopColor="#970000" />
                    </linearGradient>
                </defs>

                {rearFins.map((f, i) => (
                    <g key={i}>
                        <path d={f.side} fill="#88884e" stroke="#33331d" strokeWidth=".6" />
                        <path d={f.edge} fill="#ebeb87" stroke="#55552d" strokeWidth=".5" />
                    </g>
                ))}
                <path d="M1146 290L1148 275Q1150 269 1160 275L1175 308L1168 306L1156 283Q1152 280 1150 298z" fill="#ebeb87" />
                <path d="M1150 297Q1150 280 1156 283L1168 306z" fill="#52522f" />

                {/* pocket floor */}
                <path d="M1095 372L1320 440L1320 494L1157 433L1078 404z" fill="#ebeb87" />

                {/* rear wall */}
                <path d="M1093 287L1320 360L1320 448L1232 418C1210 410 1206 427 1188 426C1164 424 1168 402 1155 393L1096 373z" fill="#730000" />
                <path d="M1161 330H1202V421Q1190 428 1180 425Q1165 420 1164 402z" fill="url(#bore)" />
                <path d="M1094 342L1148 359Q1162 363 1163 380M1146 310L1152 388M1161 332L1165 398M1198 340L1203 419M1227 345L1229 415M1205 392Q1212 383 1226 386L1320 416" fill="none" stroke="#8c4444" strokeWidth=".8" />
                <path d="M1094 287L1320 361" stroke="#dc0d0d" strokeWidth="7" />
                <ellipse cx="1183" cy="325" rx="24" ry="18" fill="#dc0d0d" />
                <ellipse cx="1183" cy="326" rx="13" ry="11" fill="#3c1010" />
                <path d="M1096 284L1320 358" stroke="#78d6dc" strokeWidth="2.200" />
                <path d="M1094 289L1155 312" stroke="#53c516" strokeWidth="2.200" />
                <path d="M1096 284Q1092 286 1094 290" fill="none" stroke="#53c516" strokeWidth="2.200" />
                <path d="M1155 311L1212 330M1160 322L1202 337M1160 331L1196 342" stroke="#8fcdd4" strokeWidth="2" />
                <path d="M1160 322V331M1201 337L1214 332" stroke="#53c516" strokeWidth="2" />
                <path d="M1194 341L1209 346" stroke="#f0a020" strokeWidth="2" />

                {/* base and front wall */}
                <path d="M1034 488L987 572L994 578L1079 551L1320 630L1320 570L1100 500z" fill="#ebeb87" />
                <path d="M1032 397L1320 494L1320 586L1200 542L1130 522L1098 503L1070 500L1032 532z" fill="#52522f" />
                <path d="M1059 413L1067 415L1073 500L1066 502zM1121 436L1136 440L1146 521L1131 523zM1184 456L1190 457L1200 543L1193 543zM1240 477L1245 478L1250 570L1242 570z" fill="#45452a" />
                <path d="M1067 415L1073 500M1110 425L1112 440M1139 440L1147 521M1145 442L1152 524M1190 457L1200 543M1245 478L1252 520M1277 488L1284 520" stroke="#2f2f1b" strokeWidth=".8" />

                <path d="M1017 528L1066 543L1063 547L1020 560L1004 566Q997 568 998 563L1003 555L1010 554L1015 541L1013 537z" fill="#52522f" />
                <path d="M1009 561L1018 540L1019 560z" fill="#88884e" />
                <ellipse cx="1015" cy="559" rx="1.800" ry="4.500" fill="#12e032" transform="rotate(15 1015 559)" />
                <path d="M1053 530L1070 503Q1073 499 1081 501Q1083 503 1081 507L1066 530Q1061 535 1053 530z" fill="#000" stroke="#52522f" />
                <path d="M1131 552L1145 530Q1149 525 1158 528L1157 550L1146 559Q1132 561 1131 552z" fill="#000" stroke="#52522f" />
                <path d="M1177 573L1192 547Q1195 542 1202 543L1212 546L1211 584z" fill="#000" />
                <path d="M1231 590L1242 580L1243 593z" fill="#88884e" />
                <path d="M1263 601L1276 578L1275 605zM1296 613L1308 590L1307 617z" fill="#000" />
                {frontFins.map((f, i) => (
                    <g key={i} stroke="#2f2f1b" strokeWidth=".6">
                        <path d={f.face} fill="#4a4a2a" />
                        <path d={f.side} fill="#88884e" />
                        <path d={f.rim} fill="#ebeb87" />
                    </g>
                ))}

                <path d="M987 575L994 577L1078 549L1320 629V692L1085 612L998 638L990 637z" fill="#52522f" />
                <path d="M986 573L994 577L999 638L990 637z" fill="#850000" />
                <path d="M1075 551L1079 613M1081 551L1086 612" stroke="#2f2f1b" strokeWidth=".8" />
                <ellipse cx="1107" cy="593" rx="10" ry="6" transform="rotate(22 1107 593)" fill="#10e62c" />
                <ellipse cx="1110" cy="590" rx="6" ry="3" transform="rotate(22 1110 590)" fill="#071a07" />

                {/* front rail with the cutting passes */}
                <path d="M1034 397L1320 492" stroke="#dc0d0d" strokeWidth="7" />
                <ellipse cx="1132" cy="419" rx="24" ry="18" fill="#dc0d0d" />
                <ellipse cx="1133" cy="418" rx="12" ry="10" fill="#4a1818" />
                <path d="M1033 398L1320 494" stroke="#63cdd2" strokeWidth="2.200" />
                <path d="M1119 402L1155 414M1113 409L1154 423M1105 414L1158 432" stroke="#8fcdd4" strokeWidth="2" />
                <path d="M1035 394L1101 413M1112 408L1120 402M1155 421L1159 432" stroke="#53c516" strokeWidth="2.200" />
                <path d="M1036 393Q1032 394 1034 399" fill="none" stroke="#53c516" strokeWidth="2.200" />
                <path d="M1155 414L1170 419" stroke="#f4c6d6" strokeWidth="2" />

                {spots.map(([x, y]) => <ellipse key={`${x}-${y}`} cx={x} cy={y} rx="3" ry="2.500" fill="#df2a2a" />)}
                <path d="M1170 418L1209 346" stroke="#2411b4" strokeWidth="2.500" />
                <circle cx="1209" cy="346" r="2" fill="#2411b4" />
            </svg>

            <div className="absolute right-[24px] bottom-3 flex items-center gap-2 opacity-75">
                <svg viewBox="0 0 72 82" className="h-[82px] w-[72px]" stroke="#000" strokeWidth="1.200">
                    <path d="M36 0L72 21V61L36 82L0 61V21z" fill="#0c6398" />
                    <path d="M0 21L36 0Q56 10 54 28L36 18Q18 10 0 21z" fill="#7f9eb2" />
                    <path d="M36 0L72 21V52Q68 34 54 28Q56 10 36 0z" fill="#1474a8" />
                    <path d="M0 21Q14 10 28 15Q14 30 16 53Q18 62 17 71L0 61z" fill="#286f9f" />
                    <path d="M54 28Q70 34 72 52V61L52 72Q42 68 36 64L56 53z" fill="#0c6a9e" />
                    <path d="M16 53L36 64Q48 70 62 67L36 82L17 71Q18 62 16 53z" fill="#0876b0" />
                    <path d="M36 18L56 29V53L36 64L16 53V29z" fill="#000" />
                    <path d="M36 22L52 31L36 40L20 31z" fill="#5b8fb0" />
                    <path d="M20 31L36 40V59L20 50z" fill="#3c7fab" />
                    <path d="M52 31L36 40V59L52 50z" fill="#0b78b2" />
                </svg>
                <div className="leading-none font-bold text-[#c3c3c0]">
                    <p className="flex items-center gap-1 text-[38px] leading-[42px]">
                        <span className="text-[46px]">3D</span>
                        <span>世界网</span>
                    </p>
                    <p className="mt-1 font-['DejaVu_Sans',sans-serif] text-[18px] leading-5 font-normal">WWW.3DSJW.COM</p>
                </div>
            </div>
        </main>
    )
}

export default function App() {
    return (
        <div className={clsx("relative flex h-screen flex-col overflow-hidden bg-[#d3d3d3] text-[12px] text-black", sans)}>
            <MainToolbar />
            <SelectionBar />
            <div className="flex min-h-0 flex-1">
                <ResourceBar />
                <Navigator />
                <Viewport />
            </div>
            <MillingDialog />
        </div>
    )
}
